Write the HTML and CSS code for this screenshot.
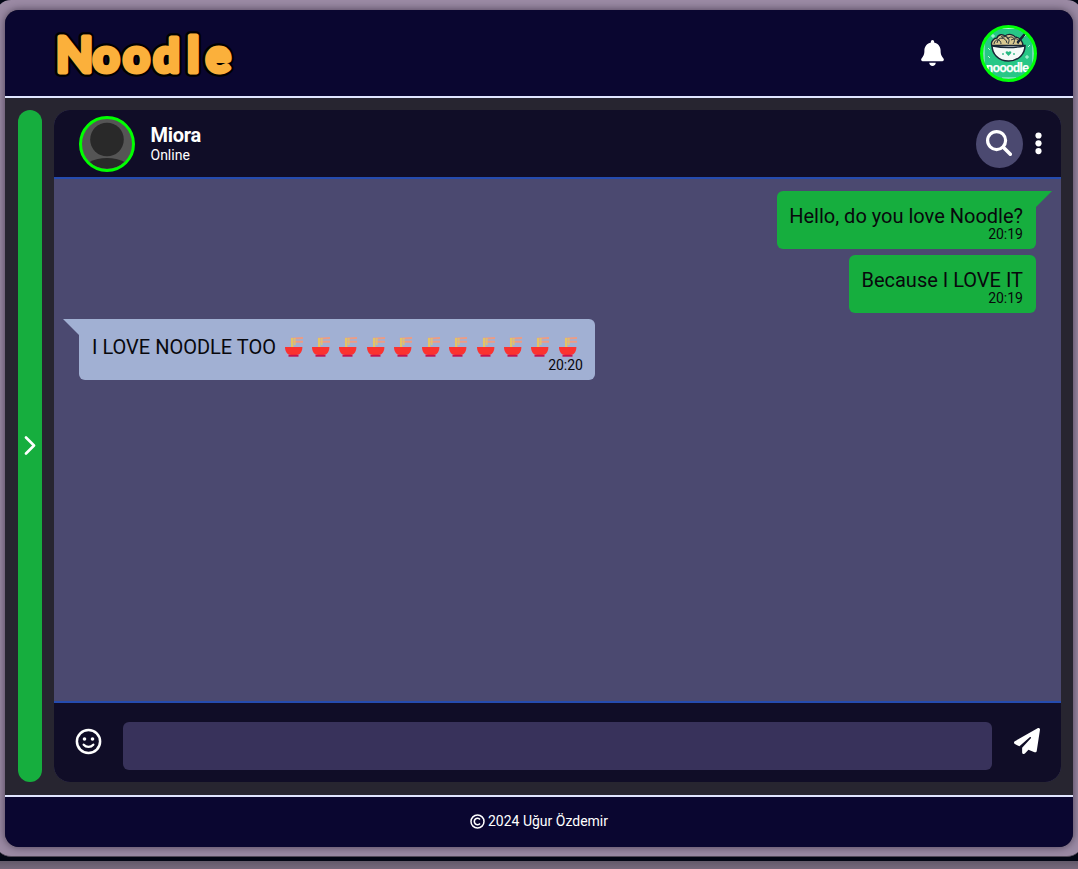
FILE: index.html
```html
<!DOCTYPE html>
<html lang="en">
<head>
<meta charset="utf-8">
<title>Noodle</title>
<link rel="stylesheet" href="styles.css">
</head>
<body>
<svg class="defs" width="0" height="0" aria-hidden="true">
  <symbol id="bowl" viewBox="0 0 18 20">
    <path d="M5.800 .8 18.300 0v1.900L5.800 2.500zM5.800 3.800h12.500v1.900H5.800z" fill="#ec9c86"/>
    <path d="M6 1h2.400v9H6zM9.200 1h1.300v7H9.200z" fill="#e3c565"/>
    <path d="M0 10h17.400c0 4.500-2.400 8-6 8H6c-3.600 0-6-3.500-6-8z" fill="#fb322f"/>
    <path d="M3.500 17.800h10v1.900h-10z" fill="#c5124f"/>
  </symbol>
</svg>
<div class="frame">
  <div class="app">
    <header class="top">
      <svg class="logo" width="190" height="60" viewBox="50 24 190 60">
        <defs><text id="brand" y="72" x="56 93 123.300 153.500 187.300 206"><tspan class="big">N</tspan>oo<tspan class="tall">d</tspan><tspan class="taller">l</tspan>e</text></defs>
        <use href="#brand" class="logo-outline"/>
        <use href="#brand" class="logo-fill"/>
      </svg>
      <div class="top-actions">
        <svg class="bell" width="23" height="26" viewBox="0 0 448 512"><path fill="#fff" d="M224 0c-17.700 0-32 14.300-32 32v19.200C119 66 64 130.600 64 208v18.800c0 47-17.300 92.400-48.500 127.600l-7.400 8.300c-8.400 9.400-10.400 22.900-5.300 34.400S19.400 416 32 416h384c12.600 0 24-7.400 29.200-18.900s3.100-25-5.300-34.400l-7.400-8.300C401.300 319.200 384 273.900 384 226.800V208c0-77.400-55-142-128-156.800V32c0-17.700-14.300-32-32-32zm45.300 493.300c12-12 18.700-28.300 18.700-45.300H160c0 17 6.700 33.300 18.700 45.300S207 512 224 512s33.300-6.700 45.300-18.700z"/></svg>
        <svg class="profile" width="57" height="57" viewBox="0 0 57 57">
          <defs><clipPath id="round"><circle cx="28.500" cy="28.500" r="26"/></clipPath></defs>
          <circle cx="28.500" cy="28.500" r="27" fill="#27c786"/>
          <g clip-path="url(#round)">
            <path d="M4 18v22M53 18v22M20 3.500h17M22 53h14" stroke="#b9f3da" stroke-width="1"/>
            <path d="M13 9v4M11 11h4M47 30v4M45 32h4M8 23l2 2M8 31l2 2M48 22l2-2M44 12l2-2" stroke="#c8ffe7" stroke-width=".9"/>
            <path d="M12 21c-2-4 2-8 5-8 1-4 6-4 8-2 4-3 9-1 10 1 5 0 8 5 8 9z" fill="#d9c991" stroke="#172535" stroke-width="1.300"/>
            <path d="M14 19c1-6 7-5 7 0m-4-1c1-7 9-6 10 0m-5-5c5-4 9 1 6 6m-1-5c5-5 10 0 6 5m-2-4c6-3 9 0 7 4m-17-7c2-2 6-1 6 1" fill="none" stroke="#27323a" stroke-width="1"/>
            <path d="M38 17l6-7" stroke="#172535" stroke-width="2.600" stroke-linecap="round"/>
            <path d="M12 20.500h33c0 8-6 15.500-16.500 15.500S12 28.500 12 20.500z" fill="#f5faf7" stroke="#172535" stroke-width="1.500"/>
            <path d="M12.500 21q16 3 32 0" fill="none" stroke="#172535" stroke-width="1.300"/>
            <path d="M28.500 31l-2.600-2.700c-1-1.600 1.200-3 2.600-1.200 1.400-1.800 3.600-.4 2.600 1.200z" fill="#27b981"/>
            <path d="M23 28v2M34 28v2" stroke="#27b981" stroke-width="1.300"/>
            <text class="profile-word" x="6" y="46.800" textLength="43" lengthAdjust="spacing">nooodle</text>
          </g>
          <circle cx="28.500" cy="28.500" r="27" fill="none" stroke="#00ff08" stroke-width="3"/>
        </svg>
      </div>
    </header>
    <main class="main">
      <aside class="drawer">
        <svg width="12" height="20" viewBox="0 0 12 20"><path d="M2 2.500l8 8-8 8" fill="none" stroke="#fff" stroke-width="2.600" stroke-linecap="round" stroke-linejoin="round"/></svg>
      </aside>
      <section class="chat">
        <div class="chat-head">
          <svg width="56" height="56" viewBox="0 0 56 56">
            <circle cx="28" cy="28" r="27" fill="#555"/>
            <circle cx="28" cy="23.500" r="16.800" fill="#292929"/>
            <path d="M10.500 46c5-2.800 11-4 17.500-4s12.500 1.200 17.500 4A26 26 0 0 1 10.500 46z" fill="#292929"/>
            <circle cx="28" cy="28" r="26.500" fill="none" stroke="#0f0" stroke-width="3"/>
          </svg>
          <div class="who"><div class="name">Miora</div><div class="status">Online</div></div>
          <div class="search">
            <svg width="26" height="26" viewBox="0 0 26 26"><circle cx="10.600" cy="10.600" r="9" fill="none" stroke="#fff" stroke-width="3.200"/><path d="M17.300 17.300l7 7" stroke="#fff" stroke-width="3.500" stroke-linecap="round"/></svg>
          </div>
          <svg class="dots" width="7" height="23" viewBox="0 0 7 23"><g fill="#fff"><circle cx="3.500" cy="3.500" r="3.100"/><circle cx="3.500" cy="11.300" r="3.100"/><circle cx="3.500" cy="19.100" r="3.100"/></g></svg>
        </div>
        <div class="messages">
          <div class="msg sent tail"><div class="text">Hello, do you love Noodle?</div><time>20:19</time></div>
          <div class="msg sent"><div class="text">Because I LOVE IT</div><time>20:19</time></div>
          <div class="msg received tail">
            <div class="text"><span class="words">I LOVE NOODLE TOO</span><span class="bowls"><svg><use href="#bowl"/></svg><svg><use href="#bowl"/></svg><svg><use href="#bowl"/></svg><svg><use href="#bowl"/></svg><svg><use href="#bowl"/></svg><svg><use href="#bowl"/></svg><svg><use href="#bowl"/></svg><svg><use href="#bowl"/></svg><svg><use href="#bowl"/></svg><svg><use href="#bowl"/></svg><svg><use href="#bowl"/></svg></span></div>
            <time>20:20</time>
          </div>
        </div>
        <div class="composer">
          <svg class="smile" width="27" height="27" viewBox="0 0 27 27"><circle cx="13.500" cy="13.500" r="11.600" fill="none" stroke="#fff" stroke-width="2.500"/><circle cx="9.500" cy="11" r="1.800" fill="#fff"/><circle cx="17.500" cy="11" r="1.800" fill="#fff"/><path d="M8.700 16.700c2.500 2.900 7.100 2.900 9.600 0" fill="none" stroke="#fff" stroke-width="2.300" stroke-linecap="round"/></svg>
          <input class="field" type="text" aria-label="Message">
          <svg class="send" width="26" height="26" viewBox="0 0 512 512"><path fill="#fff" d="M498.100 5.600c10.100 7 15.400 19.100 13.500 31.200l-64 416c-1.500 9.700-7.400 18.200-16 23s-18.900 5.400-28 1.600L284 427.700l-68.500 74.100c-8.900 9.700-22.900 12.900-35.200 8.100S160 493.200 160 480v-83.600c0-4 1.500-7.800 4.200-10.700l167.600-182.900c5.800-6.300 5.600-16-.4-22s-15.700-6.400-22-.7L106 360.800 17.700 316.600C7.100 311.300.3 300.700 0 288.900s5.900-22.800 16.100-28.700l448-256c10.700-6.100 23.900-5.500 34 1.400z"/></svg>
        </div>
      </section>
    </main>
    <footer class="bottom">
      <svg width="15" height="15" viewBox="0 0 15 15"><g fill="none" stroke="#fff"><circle cx="7.500" cy="7.500" r="6.500" stroke-width="1.500"/><path d="M10 5.500a3.200 3.200 0 1 0 0 4" stroke-width="1.600"/></g></svg>
      <span>2024 Uğur Özdemir</span>
    </footer>
  </div>
</div>
<div class="under"></div>
</body>
</html>
```

FILE: styles.css
```css
* { box-sizing: border-box; }
body {
  margin: 0;
  width: 1078px;
  height: 869px;
  overflow: hidden;
  background: #020614;
  font-family: Roboto, sans-serif;
  color: #fff;
}
svg { display: block; flex: none; }
.defs { position: absolute; }
.frame {
  width: 1088px;
  height: 857px;
  margin-left: -5px;
  padding: 10px;
  border-radius: 16px;
  background: #9b8aa4;
  border-bottom: 1px solid #514958;
}
.under { height: 8px; margin-top: 4px; background: linear-gradient(#625969, #76697c); }
.app {
  width: 1068px;
  height: 837px;
  display: flex;
  flex-direction: column;
  border-radius: 14px;
  overflow: hidden;
  background: #272530;
  box-shadow: 0 0 8px rgba(20, 14, 30, .6);
}
.top {
  height: 88px;
  background: #0a0630;
  border-bottom: 2px solid #e0e5ff;
  display: flex;
  justify-content: space-between;
  align-items: flex-start;
  padding: 14px 36px 0 45px;
}
#brand {
  font-family: Lato, sans-serif;
  font-weight: 700;
  font-size: 46px;
  stroke-linejoin: round;
}
.big { font-size: 48px; }
.tall { font-size: 46px; }
.taller { font-size: 48px; }
.logo-outline { fill: #000; stroke: #000; stroke-width: 9.500px; }
.logo-fill { fill: #fbb03b; stroke: #fbb03b; stroke-width: 5px; }
.top-actions { display: flex; gap: 36px; }
.bell { margin-top: 16px; }
.profile { margin-top: .500px; }
.profile-word {
  font: 700 12.500px Lato, sans-serif;
  fill: #fff;
  stroke: #fff;
  stroke-width: .25px;
}
.main { height: 697px; padding: 12px 12px 13px 13px; display: flex; gap: 12px; }
.drawer {
  width: 24px;
  border-radius: 12px;
  background: #16ae3e;
  display: flex;
  align-items: center;
  justify-content: center;
  padding-bottom: 2px;
}
.chat {
  flex: 1;
  border-radius: 16px;
  overflow: hidden;
  display: flex;
  flex-direction: column;
  background: #4b4970;
}
.chat-head {
  height: 69px;
  background: #100d27;
  border-bottom: 2px solid #254baf;
  display: flex;
  align-items: center;
  padding: 0 19px 0 25px;
}
.who { margin: 0 auto 0 15.500px; }
.name { font-size: 20px; font-weight: 700; line-height: 20px; padding-bottom: 2px; letter-spacing: -.3px; }
.status { font-size: 14px; line-height: 16px; }
.search {
  width: 47px;
  height: 48px;
  border-radius: 50%;
  background: #4b4970;
  display: flex;
  padding: 10px 0 0 10px;
  margin-right: 12px;
}
.messages {
  flex: 1;
  padding: 12px 25px;
  display: flex;
  flex-direction: column;
  gap: 6px;
  color: #08080c;
}
.msg { position: relative; border-radius: 6px; padding: 13px 13px 7px 12px; }
.sent { align-self: flex-end; background: #16ae3e; height: 58px; }
.received { align-self: flex-start; background: #a1b0d3; width: 516px; height: 61px; padding: 13px 12px 7px 13px; }
.tail::before { content: ""; position: absolute; top: 0; width: 24px; height: 16px; }
.sent.tail::before { right: -16px; background: #16ae3e; clip-path: polygon(0 0, 100% 0, 8px 100%, 0 100%); }
.received.tail::before { left: -16px; background: #a1b0d3; clip-path: polygon(0 0, 100% 0, 100% 100%, 16px 100%); }
.text { font-size: 20px; line-height: 24px; white-space: nowrap; }
.msg time { display: block; margin-top: -1px; font-size: 14px; line-height: 14px; text-align: right; }
.received .text { display: flex; height: 27px; padding-top: 3px; }
.words { width: 192.500px; }
.bowls { display: flex; gap: 9.450px; padding-top: 2px; }
.bowls svg { width: 18px; height: 20px; }
.composer {
  height: 81px;
  background: #100d27;
  border-top: 2px solid #254baf;
  display: flex;
  align-items: flex-start;
  padding: 19px 21px 0;
}
.smile { margin-top: 6px; }
.field {
  width: 869px;
  height: 48px;
  margin: 0 22px 0 21px;
  border: 0;
  border-radius: 6px;
  background: #38325b;
}
.send { margin-top: 6px; }
.bottom {
  height: 52px;
  background: #0a0630;
  border-top: 2px solid #e0e5ff;
  display: flex;
  align-items: center;
  justify-content: center;
  gap: 3px;
  padding-bottom: 2px;
  font-size: 14px;
}
```
